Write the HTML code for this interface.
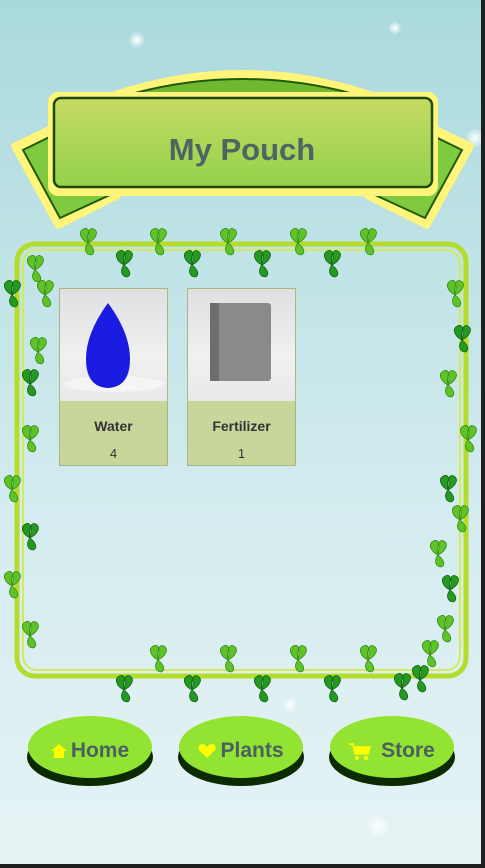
<!DOCTYPE html>
<html><head><meta charset="utf-8"><style>
*{margin:0;padding:0;box-sizing:border-box}
html,body{width:485px;height:868px;overflow:hidden;background:#1d1f20}
#app{position:absolute;left:0;top:0;width:481px;height:864px;background:linear-gradient(180deg,#a9d9dc 0%,#c0e3e6 30%,#d4ecef 60%,#e6f3f5 100%);overflow:hidden;font-family:"Liberation Sans",sans-serif}
.card{position:absolute;top:288px;width:109px;height:178px;border:1px solid #a9b67d;background:#c8d69c}
.card .img{height:112px;background:linear-gradient(180deg,#dfe0e2,#f0f0f0 60%,#e9e9e9)}
.card .n{position:absolute;top:129px;width:100%;text-align:center;font-weight:bold;font-size:14px;color:#333}
.card .q{position:absolute;top:157px;width:100%;text-align:center;font-size:13px;color:#333}
.btn{position:absolute;top:716px;width:126px;height:70px}
.btn .sh{position:absolute;left:0;top:12px;width:126px;height:58px;border-radius:50%;background:#0a2a00}
.btn .f{position:absolute;left:1px;top:0;width:124px;height:62px;border-radius:50%;background:#93e432;display:flex;align-items:center;justify-content:center;font-weight:bold;font-size:21px;color:#4a6160;gap:4px;padding-top:8px}
</style></head><body><div id="app">
<svg width="481" height="864" style="position:absolute;left:0;top:0">
<defs>
<g id="lf" transform="scale(1.3)"><path d="M0 0 C-6 -3 -8 -9 -3 -11 C0 -12 2 -9 0 0 Z M0 0 C6 -3 9 -9 4 -11 C1 -12 -1 -8 0 0Z M0 0 C-4 5 -1 10 3 9 C6 7 4 3 0 0Z" fill="#5fc327" stroke="#2f8a14" stroke-width=".6"/></g>
<g id="ld" transform="scale(1.3)"><path d="M0 0 C-6 -3 -8 -9 -3 -11 C0 -12 2 -9 0 0 Z M0 0 C6 -3 9 -9 4 -11 C1 -12 -1 -8 0 0Z M0 0 C-4 5 -1 10 3 9 C6 7 4 3 0 0Z" fill="#249a22" stroke="#11600f" stroke-width=".6"/></g>
<radialGradient id="sp"><stop offset="0" stop-color="#fff"/><stop offset="1" stop-color="#fff" stop-opacity="0"/></radialGradient>
<linearGradient id="bg1" x1="0" y1="0" x2="0" y2="1"><stop offset="0" stop-color="#c6da62"/><stop offset="1" stop-color="#93d24a"/></linearGradient>
</defs>
<circle cx="137" cy="40" r="9" fill="url(#sp)"/><circle cx="395" cy="28" r="7" fill="url(#sp)"/><circle cx="475" cy="138" r="10" fill="url(#sp)"/><circle cx="290" cy="705" r="8" fill="url(#sp)"/><circle cx="378" cy="826" r="12" fill="url(#sp)"/>
<path d="M14 146 L72 118 L118 196 L58 226 Z" fill="#fff57a" stroke="#fff57a" stroke-width="6" stroke-linejoin="round"/>
<path d="M471 146 L413 118 L367 196 L427 226 Z" fill="#fff57a" stroke="#fff57a" stroke-width="6" stroke-linejoin="round"/>
<path d="M23 150 L72 126 L112 194 L60 218 Z" fill="#7fca3e" stroke="#1f5a0a" stroke-width="2"/>
<path d="M462 150 L413 126 L373 194 L425 218 Z" fill="#7fca3e" stroke="#1f5a0a" stroke-width="2"/>
<path d="M90 100 Q242 40 395 100 Z" fill="#fff57a"/>
<path d="M135 93 Q242 65 350 93 Z" fill="#6fb830" stroke="#1f5a0a" stroke-width="2"/>
<rect x="48" y="92" width="390" height="104" rx="10" fill="#fff57a"/>
<rect x="54" y="98" width="378" height="89" rx="7" fill="url(#bg1)" stroke="#1d4a06" stroke-width="2.5"/>
<text x="242" y="160" text-anchor="middle" font-family="Liberation Sans,sans-serif" font-weight="bold" font-size="31" fill="#4d6664">My Pouch</text>
<rect x="17" y="244" width="449" height="432" rx="18" fill="none" stroke="#b3dd2a" stroke-width="5"/>
<rect x="23" y="250" width="437" height="420" rx="14" fill="none" stroke="#d5ea5a" stroke-width="2"/>
<g>
<use href="#lf" x="88" y="243"/><use href="#lf" x="158" y="243"/><use href="#lf" x="228" y="243"/><use href="#lf" x="298" y="243"/><use href="#lf" x="368" y="243"/>
<use href="#ld" x="124" y="265"/><use href="#ld" x="192" y="265"/><use href="#ld" x="262" y="265"/><use href="#ld" x="332" y="265"/>
<use href="#lf" x="35" y="270"/><use href="#ld" x="12" y="295"/><use href="#lf" x="45" y="295"/><use href="#lf" x="38" y="352"/><use href="#ld" x="30" y="384"/><use href="#lf" x="30" y="440"/><use href="#lf" x="12" y="490"/><use href="#ld" x="30" y="538"/><use href="#lf" x="12" y="586"/><use href="#lf" x="30" y="636"/>
<use href="#lf" x="455" y="295"/><use href="#ld" x="462" y="340"/><use href="#lf" x="448" y="385"/><use href="#lf" x="468" y="440"/><use href="#ld" x="448" y="490"/><use href="#lf" x="460" y="520"/><use href="#lf" x="438" y="555"/><use href="#ld" x="450" y="590"/><use href="#lf" x="445" y="630"/><use href="#lf" x="430" y="655"/>
<use href="#lf" x="158" y="660"/><use href="#lf" x="228" y="660"/><use href="#lf" x="298" y="660"/><use href="#lf" x="368" y="660"/>
<use href="#ld" x="124" y="690"/><use href="#ld" x="192" y="690"/><use href="#ld" x="262" y="690"/><use href="#ld" x="332" y="690"/><use href="#ld" x="402" y="688"/><use href="#ld" x="420" y="680"/>
</g>
</svg>
<div class="card" style="left:59px"><div class="img"><svg width="107" height="112"><ellipse cx="54" cy="95" rx="50" ry="8" fill="#f5f5f5"/><path d="M48 14 Q26 44 26 70 Q26 98 48 99 Q70 98 70 70 Q70 44 48 14Z" fill="#1a1ae0"/></svg></div><div class="n">Water</div><div class="q">4</div></div>
<div class="card" style="left:187px"><div class="img"><svg width="107" height="112"><rect x="22" y="14" width="61" height="78" rx="3" fill="#8a8a8a"/><rect x="22" y="14" width="9" height="78" fill="#6d6d6d"/></svg></div><div class="n">Fertilizer</div><div class="q">1</div></div>
<div class="btn" style="left:27px"><div class="sh"></div><div class="f"><svg width="16" height="16"><path d="M8 1 L16 8 H13 V15 H3 V8 H0 Z" fill="#ffff00"/></svg>Home</div></div>
<div class="btn" style="left:178px"><div class="sh"></div><div class="f"><svg width="18" height="16"><path d="M9 15 L1 7 Q-1 2 4 1 Q7 1 9 4 Q11 1 14 1 Q19 2 17 7 Z" fill="#ffff00"/></svg>Plants</div></div>
<div class="btn" style="left:329px"><div class="sh"></div><div class="f"><svg width="22" height="18"><path d="M0 2 H4 L6 12 H19 L21 5 H5" fill="#ffff00" stroke="#ffff00" stroke-width="1.5"/><circle cx="8" cy="16" r="2" fill="#ffff00"/><circle cx="17" cy="16" r="2" fill="#ffff00"/></svg>&nbsp;Store</div></div>
</div></body></html>
